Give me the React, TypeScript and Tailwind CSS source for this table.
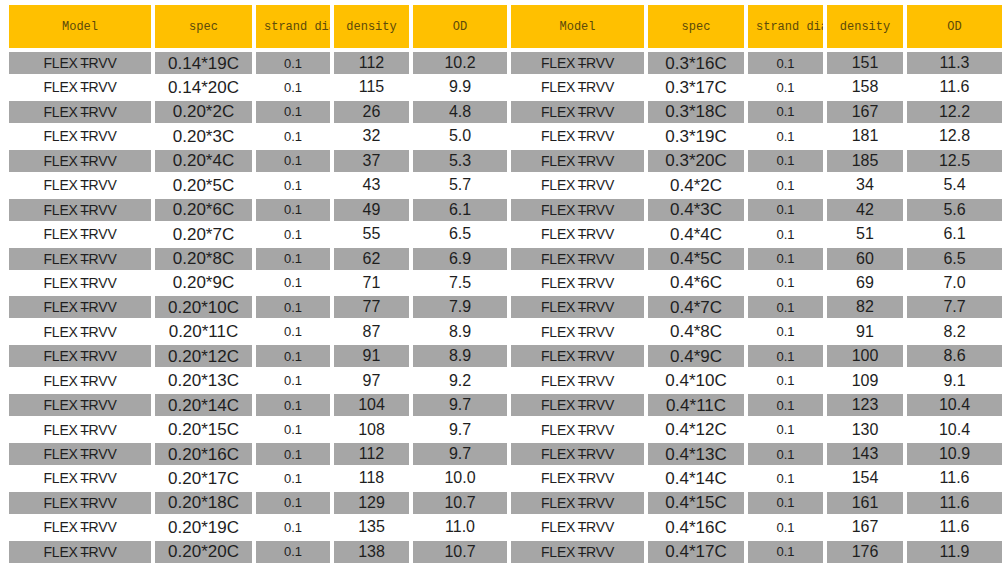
import React from "react";

const left = {
  spec: ["0.14*19C", "0.14*20C", ...Array.from({ length: 19 }, (_, i) => `0.20*${i + 2}C`)],
  density: [112, 115, 26, 32, 37, 43, 49, 55, 62, 71, 77, 87, 91, 97, 104, 108, 112, 118, 129, 135, 138],
  od: ["10.2", "9.9", "4.8", "5.0", "5.3", "5.7", "6.1", "6.5", "6.9", "7.5", "7.9", "8.9", "8.9", "9.2", "9.7", "9.7", "9.7", "10.0", "10.7", "11.0", "10.7"],
};

const right = {
  spec: [
    ...Array.from({ length: 5 }, (_, i) => `0.3*${i + 16}C`),
    ...Array.from({ length: 16 }, (_, i) => `0.4*${i + 2}C`),
  ],
  density: [151, 158, 167, 181, 185, 34, 42, 51, 60, 69, 82, 91, 100, 109, 123, 130, 143, 154, 161, 167, 176],
  od: ["11.3", "11.6", "12.2", "12.8", "12.5", "5.4", "5.6", "6.1", "6.5", "7.0", "7.7", "8.2", "8.6", "9.1", "10.4", "10.4", "10.9", "11.6", "11.6", "11.6", "11.9"],
};

const headers = ["Model", "spec", "strand diameter", "density", "OD", "Model", "spec", "strand diameter", "density", "OD"];

const cols = "grid grid-cols-[142px_97px_74px_75px_94px_133px_96px_75px_76px_95px] gap-x-[4px]";

const Model = () => (
  <span className="text-[14px] tracking-[-0.2px]">
    FLEX<span className="ml-[3px] mr-[-8px]">–</span>TRVV
  </span>
);

const Cell: React.FC<{ shade: boolean; children: React.ReactNode; size: string }> = ({ shade, children, size }) => (
  <div className={`h-[22px] flex items-center justify-center text-[#1e1e1e] leading-none ${size} ${shade ? "bg-[#a6a6a6]" : "bg-white"}`}>
    {children}
  </div>
);

export default function App() {
  return (
    <div className="w-[1004px] h-[569px] bg-white pl-[9px] pt-[5px] overflow-hidden" style={{ fontFamily: '"Liberation Sans", Arial, sans-serif' }}>
      <div className={cols}>
        {headers.map((h, i) => (
          <div
            key={i}
            className={`h-[43px] bg-[#ffc000] flex items-center overflow-hidden whitespace-nowrap text-[12px] text-[#5c4a0a] ${
              h === "strand diameter" ? "justify-start pl-[8px]" : "justify-center"
            }`}
            style={{ fontFamily: '"Liberation Mono", "Courier New", monospace' }}
          >
            {h}
          </div>
        ))}
      </div>
      <div className={`${cols} gap-y-[2.45px] mt-[4px]`}>
        {left.spec.map((_, r) => {
          const shade = r % 2 === 0;
          return (
            <React.Fragment key={r}>
              <Cell shade={shade} size="text-[14px]"><Model /></Cell>
              <Cell shade={shade} size="text-[17px]">{left.spec[r]}</Cell>
              <Cell shade={shade} size="text-[13px]">0.1</Cell>
              <Cell shade={shade} size="text-[16px]">{left.density[r]}</Cell>
              <Cell shade={shade} size="text-[16px]">{left.od[r]}</Cell>
              <Cell shade={shade} size="text-[14px]"><Model /></Cell>
              <Cell shade={shade} size="text-[17px]">{right.spec[r]}</Cell>
              <Cell shade={shade} size="text-[13px]">0.1</Cell>
              <Cell shade={shade} size="text-[16px]">{right.density[r]}</Cell>
              <Cell shade={shade} size="text-[16px]">{right.od[r]}</Cell>
            </React.Fragment>
          );
        })}
      </div>
    </div>
  );
}
